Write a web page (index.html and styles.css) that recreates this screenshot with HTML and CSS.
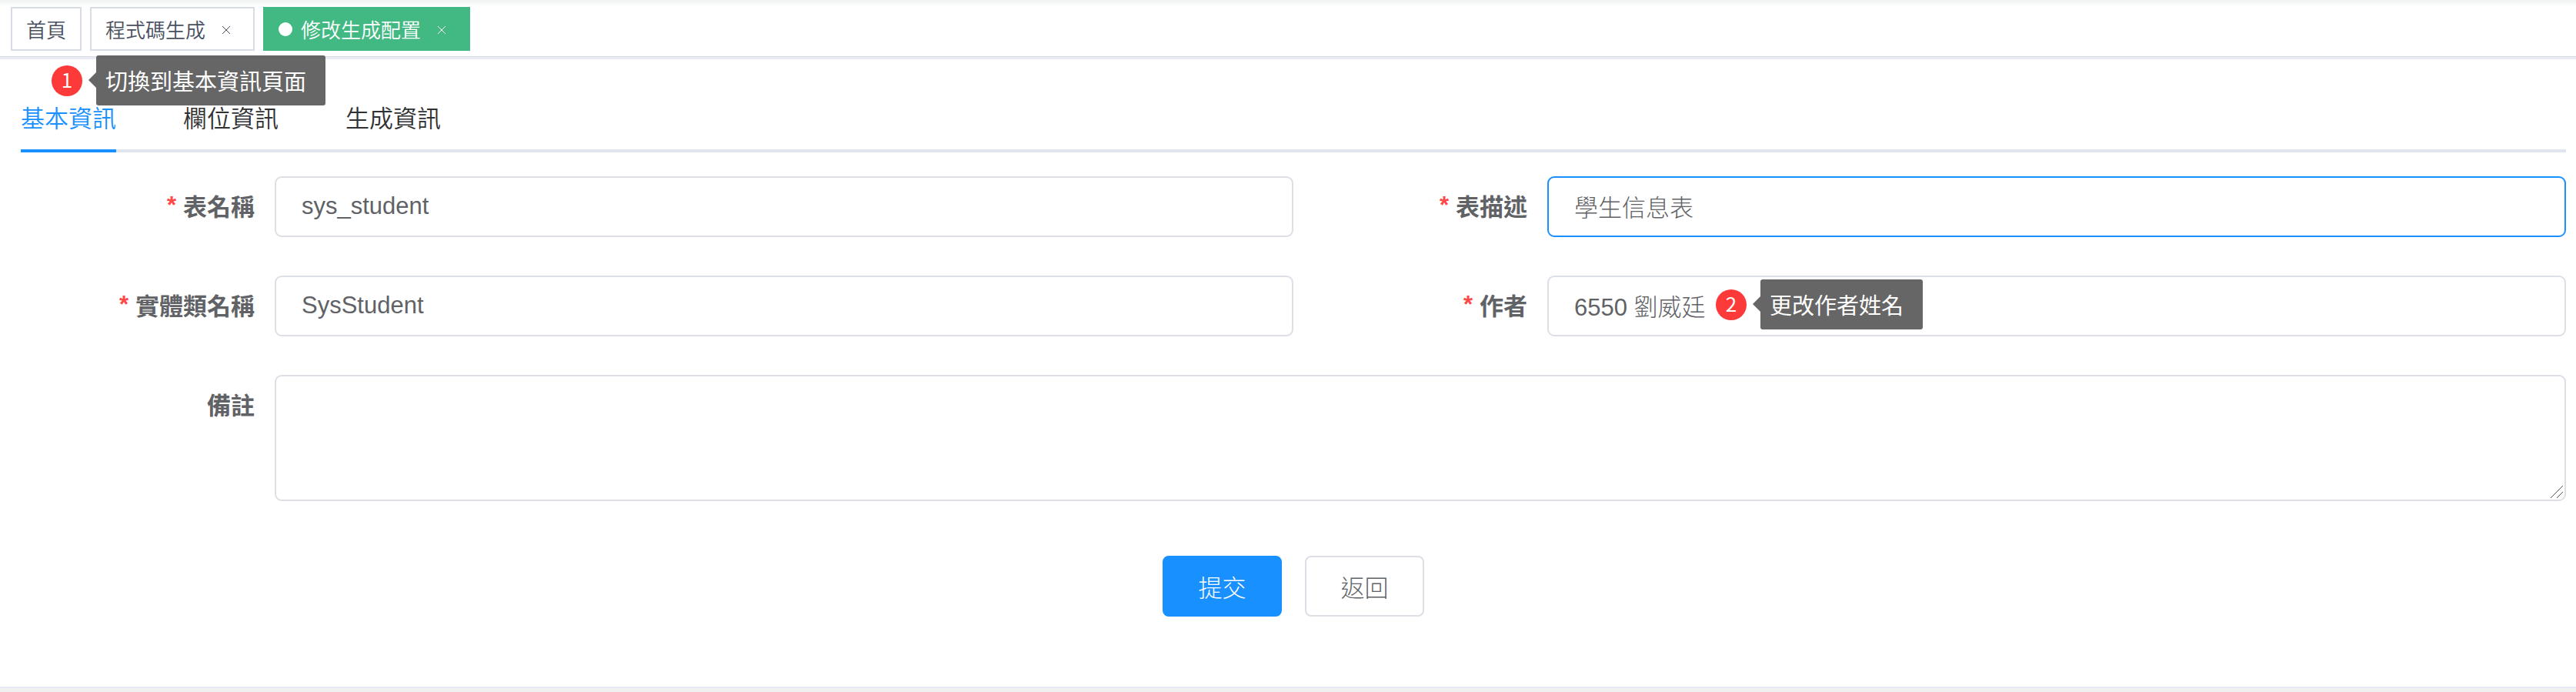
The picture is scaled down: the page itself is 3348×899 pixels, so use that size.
FILE: index.html
```
<!DOCTYPE html>
<html lang="zh-Hant">
<head>
<meta charset="utf-8">
<title>修改生成配置</title>
<link rel="stylesheet" href="styles.css">
</head>
<body>
<nav class="tags" aria-label="已開啟頁面">
  <a class="tag" href="#home">首頁</a>
  <a class="tag" href="#gen">程式碼生成<svg class="close" viewBox="0 0 10 10"><path d="M0 0L10 10M10 0L0 10"/></svg></a>
  <a class="tag tag-active" href="#edit"><span class="dot"></span>修改生成配置<svg class="close" viewBox="0 0 10 10"><path d="M0 0L10 10M10 0L0 10"/></svg></a>
</nav>
<main class="page">
  <div class="tabs" role="tablist">
    <button class="tab tab-active" type="button" role="tab" aria-selected="true">基本資訊</button>
    <button class="tab" type="button" role="tab">欄位資訊</button>
    <button class="tab" type="button" role="tab">生成資訊</button>
    <div class="note note-tabs"><span class="num">1</span><span class="tip">切換到基本資訊頁面</span></div>
  </div>
  <form class="form">
    <div class="field">
      <label class="label required" for="table">表名稱</label>
      <input class="input" id="table" type="text" value="sys_student">
    </div>
    <div class="field">
      <label class="label required" for="desc">表描述</label>
      <input class="input input-focus" id="desc" type="text" value="學生信息表">
    </div>
    <div class="field">
      <label class="label required" for="entity">實體類名稱</label>
      <input class="input" id="entity" type="text" value="SysStudent">
    </div>
    <div class="field">
      <label class="label required" for="author">作者</label>
      <input class="input" id="author" type="text" value="6550 劉威廷">
      <div class="note note-author"><span class="num">2</span><span class="tip">更改作者姓名</span></div>
    </div>
    <div class="field field-wide">
      <label class="label" for="remark">備註</label>
      <textarea class="input area" id="remark"></textarea>
      <svg class="grip" viewBox="0 0 16 16"><path d="M0 16L16 0M8 16L16 8"/></svg>
    </div>
    <div class="actions">
      <button class="btn btn-primary" type="button">提交</button>
      <button class="btn" type="button">返回</button>
    </div>
  </form>
</main>
</body>
</html>
```
FILE: styles.css
```
* { box-sizing: border-box; }
body {
  margin: 0;
  min-height: 100vh;
  display: flex;
  flex-direction: column;
  background: #fff;
  color: #303133;
  font-family: "Liberation Sans", "Noto Sans CJK TC", sans-serif;
  font-size: 31px;
}
.tags {
  display: flex;
  gap: 11px;
  padding: 9px 14px 7px;
  background: linear-gradient(#f0f2f2, #fff 9px);
  border-bottom: 1px solid #d8dce5;
  box-shadow: 0 3px 0 #e8ebf3;
}
.tag {
  display: flex;
  align-items: center;
  height: 57px;
  padding: 0 18px;
  border: 2px solid #d8dce5;
  background: #fff;
  color: #495060;
  font-family: "Noto Sans CJK TC", sans-serif;
  font-size: 26px;
  font-weight: 350;
  text-decoration: none;
}
.tag-active { background: #42b983; border-color: #42b983; color: #fff; }
.dot { width: 18px; height: 18px; margin-right: 11px; border-radius: 50%; background: #fff; }
.close { width: 10px; height: 10px; margin: 2px 12px 0 22px; fill: none; stroke: currentColor; }
.page {
  flex: 1;
  padding: 38px 13px 0 27px;
  border-bottom: 5px solid #f0f0f0;
  box-shadow: inset 0 -2px 0 #e6eaf4;
}
.tabs {
  position: relative;
  display: flex;
  gap: 87px;
  border-bottom: 4px solid #dfe4ed;
}
.tab {
  height: 86px;
  margin-bottom: -4px;
  padding: 0 0 4px;
  border: 0;
  border-bottom: 4px solid transparent;
  background: none;
  color: #303133;
  font-family: "Noto Sans CJK TC", sans-serif;
  font-size: 31px;
  font-weight: 350;
}
.tab-active { border-color: #1890ff; color: #1890ff; }
.note { position: absolute; display: flex; align-items: center; gap: 18px; color: #fff; }
.note-tabs { left: 40px; top: -40px; }
.note-author { left: 549px; top: 5px; }
.num {
  display: grid;
  place-items: center;
  width: 40px;
  height: 40px;
  padding-bottom: 4px;
  border-radius: 50%;
  background: #fc3a3a;
  font-family: "Noto Sans CJK TC", sans-serif;
  font-size: 26px;
  line-height: 36px;
}
.tip {
  position: relative;
  height: 65px;
  padding: 0 25px 0 12px;
  border-radius: 3px;
  background: rgba(85, 85, 85, 0.9);
  font-family: "Noto Sans CJK TC", sans-serif;
  font-size: 29px;
  line-height: 65px;
}
.tip::before {
  content: "";
  position: absolute;
  left: -10px;
  top: 22px;
  border: solid transparent;
  border-width: 10px 10px 10px 0;
  border-right-color: rgba(85, 85, 85, 0.9);
}
.form { display: grid; grid-template-columns: 1fr 1fr; row-gap: 50px; padding-top: 31px; }
.field { position: relative; display: flex; align-items: flex-start; }
.field-wide, .actions { grid-column: 1 / -1; }
.label {
  display: flex;
  flex: 0 0 330px;
  justify-content: flex-end;
  height: 79px;
  padding-right: 26px;
  color: #606266;
  font-family: "Noto Sans CJK TC", sans-serif;
  font-weight: 700;
  line-height: 76px;
}
.required::before { content: "*"; margin-right: 9px; color: #ff4949; font-family: "Liberation Sans", sans-serif; }
.input {
  flex: 1;
  min-width: 0;
  height: 79px;
  padding: 0 33px 2px;
  border: 2px solid #dcdfe6;
  border-radius: 9px;
  outline: 0;
  background: #fff;
  color: #606266;
  font: 300 31px "Liberation Sans", "Noto Sans CJK TC", sans-serif;
}
.input-focus { border-color: #1890ff; }
.area { height: 164px; padding: 12px 33px; resize: vertical; }
.area::-webkit-resizer { background: transparent; }
.grip { position: absolute; right: 4px; bottom: 4px; width: 16px; height: 16px; fill: none; stroke: #555; pointer-events: none; }
.actions { display: flex; justify-content: center; gap: 30px; padding-top: 21px; }
.btn {
  width: 155px;
  height: 79px;
  padding: 0;
  border: 2px solid #dcdfe6;
  border-radius: 8px;
  background: #fff;
  color: #606266;
  font: 300 31px "Noto Sans CJK TC", sans-serif;
}
.btn-primary { background: #1890ff; border-color: #1890ff; color: #fff; }
```
